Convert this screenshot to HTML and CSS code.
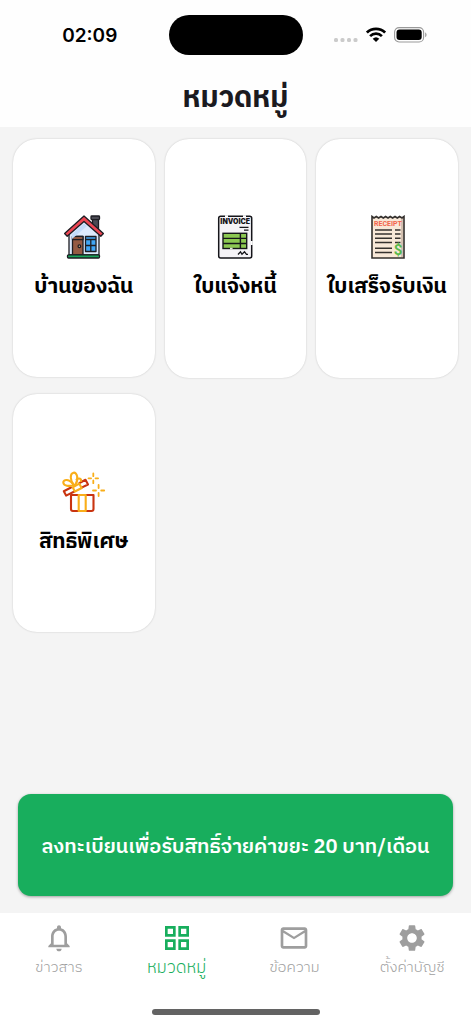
FILE: index.html
```html
<!DOCTYPE html>
<html lang="th">
<head>
    <meta charset="UTF-8">
    <meta name="viewport" content="width=device-width, initial-scale=1.0">
    <title>หมวดหมู่</title>
    <link rel="stylesheet" href="styles.css">
</head>
<body>
    <header class="header">
        <div class="status-bar">
            <span class="time">02:09</span>
            <div class="island"></div>
            <div class="status-icons">
                <svg width="24" height="16" viewBox="0 0 24 16">
                    <g fill="#cbcbcb">
                        <rect x="0" y="11" width="4" height="4" rx="1.5"/>
                        <rect x="6.5" y="11" width="4" height="4" rx="1.5"/>
                        <rect x="13" y="11" width="4" height="4" rx="1.5"/>
                        <rect x="19.5" y="11" width="4" height="4" rx="1.5"/>
                    </g>
                </svg>
                <svg width="20" height="16" viewBox="0 0 20 16">
                    <g fill="none" stroke="#000" stroke-width="2.7">
                        <path d="M.9 5.6a13 13 0 0 1 18.2 0"/>
                        <path d="M4.1 9.1a8.5 8.5 0 0 1 11.8 0"/>
                    </g>
                    <path d="M6.7 11.7a4.8 4.8 0 0 1 6.6 0L10 15z"/>
                </svg>
                <svg width="33" height="16" viewBox="0 0 33 16">
                    <rect x=".6" y=".6" width="29" height="14.4" rx="4.5" fill="none" stroke="#999" stroke-width="1.1"/>
                    <rect x="2.5" y="2.5" width="25.2" height="10.6" rx="3"/>
                    <path d="M31.2 5.5c1.8.7 1.8 4 0 4.7z" fill="#999"/>
                </svg>
            </div>
        </div>
        <h1 class="title">หมวดหมู่</h1>
    </header>

    <main class="content">
        <div class="grid">
            <button type="button" class="card">
                <svg class="card-icon" viewBox="-1 0 44 44">
                    <g stroke="#1d1d23" stroke-width="1.3" stroke-linejoin="round">
                        <path d="M29.5 4h6v13l-6-5z" fill="#4b4b54"/>
                        <rect x="28" y="1" width="8.5" height="3.6" rx=".8" fill="#4b4b54"/>
                        <path d="M6 18L21 5l15 13v22H6z" fill="#dde9fc"/>
                        <path d="M21 1L1.6 18.5l2.6 2.8L21 6.5l16.8 14.8 2.6-2.8z" fill="#ee4653"/>
                        <rect x="9.5" y="21.5" width="10.5" height="18.5" fill="#955a43"/>
                        <path d="M9.5 21.5H20v3H9.5z" fill="#b46b4d"/>
                        <rect x="22.5" y="21.5" width="10.5" height="15" fill="#3fa5f5"/>
                        <path d="M22.5 24.5H33M22.5 30.5H33M27.8 24.5v12" fill="none"/>
                        <circle cx="16.4" cy="31.2" r="1.3" fill="#f0c7a2"/>
                        <rect x="4.5" y="39.8" width="32" height="3.2" rx="1" fill="#18a55a"/>
                    </g>
                    <path d="M9 19L21 8.5l3 2.6L9 24z" fill="#c3dcfb"/>
                </svg>
                <span class="card-label">บ้านของฉัน</span>
            </button>
            <button type="button" class="card">
                <svg class="card-icon" viewBox="0 0 44 44">
                    <rect x="5.7" y="1.2" width="33" height="41.7" rx="2" fill="#f5f3f7" stroke="#15151a" stroke-width="1.5"/>
                    <path d="M12 1.2h3M30 1.2h3M38.7 26v4" stroke="#fff" stroke-width="2"/>
                    <text class="invoice-text" x="22.2" y="9" text-anchor="middle">INVOICE</text>
                    <path d="M26.5 12.4h9M31 15.2h4.5" stroke="#15151a" stroke-width="1.3"/>
                    <g fill="#8cc852" stroke="#15151a" stroke-width="1.4">
                        <rect x="10" y="18.3" width="23.7" height="15.2"/>
                        <path d="M10 23.4h23.7M10 28.5h23.7M27.4 18.3v15.2" fill="none"/>
                    </g>
                    <path d="M17 33.5h2.6" stroke="#e0ecd5" stroke-width="1.6"/>
                    <path d="M25 39.5l2.5-2.7 1.5 2.5 2.5-2.5 2 2.5h1.5" fill="none" stroke="#15151a" stroke-width="1.3"/>
                </svg>
                <span class="card-label">ใบแจ้งหนี้</span>
            </button>
            <button type="button" class="card">
                <svg class="card-icon" viewBox="-1 0 44 44">
                    <path d="M6 1.5l2 1.5 2.3-1.5 2.3 1.5L15 1.5 17.3 3l2.3-1.5L22 3l2.3-1.5L26.6 3 29 1.5 31.3 3l2.3-1.5L36 3l2-1.5V43H6z" fill="#f8e8d8"/>
                    <path d="M36 4v38" stroke="#d4c1b1" stroke-width="2"/>
                    <path d="M6 1.5l2 1.5 2.3-1.5 2.3 1.5L15 1.5 17.3 3l2.3-1.5L22 3l2.3-1.5L26.6 3 29 1.5 31.3 3l2.3-1.5L36 3l2-1.5V43H6z" fill="none" stroke="#34302d" stroke-width="1.6"/>
                    <text class="receipt-text" x="22" y="10.5" text-anchor="middle">RECEIPT</text>
                    <path d="M9 15h17M9 19h17M9 23.3h17M9 27.4h17M9 33.3h17M9 37.5h17M29 15h5.5M29 19h5.5M29 23.3h5.5M29 27.4h5.5" stroke="#36322f" stroke-width="1.5"/>
                    <text class="dollar-text" x="32" y="39.7" text-anchor="middle">$</text>
                </svg>
                <span class="card-label">ใบเสร็จรับเงิน</span>
            </button>
            <button type="button" class="card">
                <svg class="card-icon" viewBox="0 0 44 44">
                    <g fill="none" stroke-width="2.1" stroke-linejoin="round" stroke-linecap="round">
                        <g stroke="#c93410">
                            <path d="M9 25h22.5v14q0 2-2 2H11q-2 0-2-2z"/>
                            <path d="M9 17.500L1.800 21.300l2.300 4.300 8.300-4.100M17.500 13l6-3.200 2.500 4.700-6.400 3.100"/>
                        </g>
                        <g stroke="#f9ae19">
                            <path d="M16.700 25h7v16h-7zM10.700 17.300l6.600-3.600 2.400 4.300-6.800 3.500z"/>
                            <path d="M12 15.300C7 16.500 1.500 16 1.300 12.500S7.500 8.500 12 15.300z"/>
                            <path d="M12 15.300C7.500 10 8 3.500 11.500 2.700S17 9 13.500 14.500"/>
                            <path d="M14.500 9.500c3-2 5-.5 4.500 1.500"/>
                            <path d="M31.300 3.500v2.700M31.300 10.500v2.700M26.500 8.300h2.600M33.500 8.300h2.600M36.600 15v3M36.600 23v3M31 20.500h3M39.200 20.500h3" stroke-width="1.800"/>
                        </g>
                    </g>
                </svg>
                <span class="card-label">สิทธิพิเศษ</span>
            </button>
        </div>
        <button type="button" class="register">ลงทะเบียนเพื่อรับสิทธิ์จ่ายค่าขยะ 20 บาท/เดือน</button>
    </main>

    <nav class="bottom-nav">
        <a href="#" class="nav-item">
            <svg class="nav-icon" viewBox="0 0 24 24"><path d="M12 22c1.100 0 2-.9 2-2h-4c0 1.100.9 2 2 2zm6-6v-5c0-3.070-1.630-5.640-4.500-6.320V4c0-.83-.67-1.500-1.500-1.500s-1.500.67-1.500 1.500v.68C7.640 5.360 6 7.920 6 11v5l-2 2v1h16v-1l-2-2zm-2 1H8v-6c0-2.480 1.510-4.500 4-4.500s4 2.020 4 4.500v6z"/></svg>
            <span>ข่าวสาร</span>
        </a>
        <a href="#" class="nav-item active">
            <svg class="nav-icon" viewBox="0 0 24 24"><path fill-rule="evenodd" d="M3 3v8h8V3H3zm6 6H5V5h4v4zm-6 4v8h8v-8H3zm6 6H5v-4h4v4zm4-16v8h8V3h-8zm6 6h-4V5h4v4zm-6 4v8h8v-8h-8zm6 6h-4v-4h4v4z"/></svg>
            <span>หมวดหมู่</span>
        </a>
        <a href="#" class="nav-item">
            <svg class="nav-icon" viewBox="0 0 24 24"><path d="M22 6c0-1.100-.9-2-2-2H4c-1.100 0-2 .9-2 2v12c0 1.100.9 2 2 2h16c1.100 0 2-.9 2-2V6zm-2 0l-8 5-8-5h16zm0 12H4V8l8 5 8-5v10z"/></svg>
            <span>ข้อความ</span>
        </a>
        <a href="#" class="nav-item">
            <svg class="nav-icon" viewBox="0 0 24 24"><path d="M19.140 12.940c.04-.3.06-.61.06-.94 0-.32-.02-.64-.07-.94l2.030-1.580c.18-.14.23-.41.12-.61l-1.920-3.320c-.12-.22-.37-.29-.59-.22l-2.390.96c-.5-.38-1.030-.7-1.620-.94l-.36-2.540c-.04-.24-.24-.41-.48-.41h-3.840c-.24 0-.43.17-.47.41l-.36 2.540c-.59.24-1.130.57-1.620.94l-2.390-.96c-.22-.08-.47 0-.59.22L2.740 8.870c-.12.21-.08.47.12.61l2.030 1.580c-.05.3-.09.63-.09.94s.02.64.07.94l-2.030 1.580c-.18.14-.23.41-.12.61l1.920 3.320c.12.22.37.29.59.22l2.390-.96c.5.38 1.030.7 1.620.94l.36 2.540c.05.24.24.41.48.41h3.840c.24 0 .44-.17.47-.41l.36-2.540c.59-.24 1.130-.56 1.620-.94l2.390.96c.22.08.47 0 .59-.22l1.920-3.320c.12-.22.07-.47-.12-.61l-2.010-1.580zM12 15.600c-1.980 0-3.600-1.620-3.600-3.600s1.620-3.600 3.600-3.600 3.600 1.620 3.600 3.600-1.620 3.600-3.600 3.600z"/></svg>
            <span>ตั้งค่าบัญชี</span>
        </a>
    </nav>
    <div class="home-bar"></div>
</body>
</html>
```
FILE: styles.css
```css
* {
    box-sizing: border-box;
}

body {
    margin: 0;
    min-height: 100vh;
    display: flex;
    flex-direction: column;
    font-family: "IBM Plex Sans Thai", "Noto Sans Thai", "Noto Sans", sans-serif;
    background: #f4f4f4;
    color: #000;
}

button {
    font-family: inherit;
    border: none;
    cursor: pointer;
}

.header {
    background: #fefefe;
}

.status-bar {
    display: grid;
    grid-template-columns: 1fr 134px 1fr;
    align-items: center;
    height: 70px;
}

.time {
    font-family: Inter, sans-serif;
    font-size: 19px;
    font-weight: 600;
    text-align: center;
    padding-left: 11px;
}

.island {
    height: 40px;
    border-radius: 20px;
    background: #000;
}

.status-icons {
    display: flex;
    justify-content: center;
    gap: 8px;
    padding-right: 12px;
}

.title {
    margin: 0;
    font-size: 29px;
    line-height: 57px;
    font-weight: 700;
    text-align: center;
    color: #1b1a20;
}

.content {
    flex: 1;
    display: flex;
    flex-direction: column;
    justify-content: space-between;
    gap: 16px;
    padding: 12px 13px 17px;
}

.grid {
    display: grid;
    grid-template-columns: repeat(3, 1fr);
    gap: 16px 10px;
}

.card {
    aspect-ratio: 0.594;
    display: flex;
    flex-direction: column;
    align-items: center;
    justify-content: center;
    gap: 14px;
    padding: 0;
    background: #fff;
    border-radius: 24px;
    box-shadow: 0 0 2px rgba(0, 0, 0, 0.2);
    color: #000;
}

.card-icon {
    width: 44px;
    height: 44px;
}

.card-label {
    font-size: 21px;
    line-height: 28px;
    font-weight: 700;
    white-space: nowrap;
}

.invoice-text {
    font: 900 7px Inter, sans-serif;
    fill: #15151a;
}

.receipt-text {
    font: 700 7px Roboto, sans-serif;
    fill: #f3654b;
}

.dollar-text {
    font: 700 15px Roboto, sans-serif;
    fill: #59b94c;
}

.register {
    margin: 0 5px;
    padding: 39px 16px 33px;
    border-radius: 13px;
    background: #18ae5d;
    box-shadow: 0 1px 3px rgba(0, 0, 0, 0.35);
    color: #fff;
    font-size: 20px;
    line-height: 30px;
    font-weight: 600;
    white-space: nowrap;
}

.bottom-nav {
    display: flex;
    padding: 9px 0 0;
    background: #fff;
}

.nav-item {
    flex: 1;
    display: flex;
    flex-direction: column;
    align-items: center;
    color: #9e9e9e;
    font-size: 15px;
    line-height: 28px;
    font-weight: 300;
    text-decoration: none;
}

.nav-item.active {
    color: #18ae5d;
    font-size: 17px;
}

.nav-icon {
    width: 32px;
    height: 32px;
    fill: currentColor;
}

.home-bar {
    display: flex;
    justify-content: center;
    padding: 27px 0 9px;
    background: #fff;
}

.home-bar::before {
    content: "";
    width: 168px;
    height: 6px;
    border-radius: 3px;
    background: #636363;
}
```
